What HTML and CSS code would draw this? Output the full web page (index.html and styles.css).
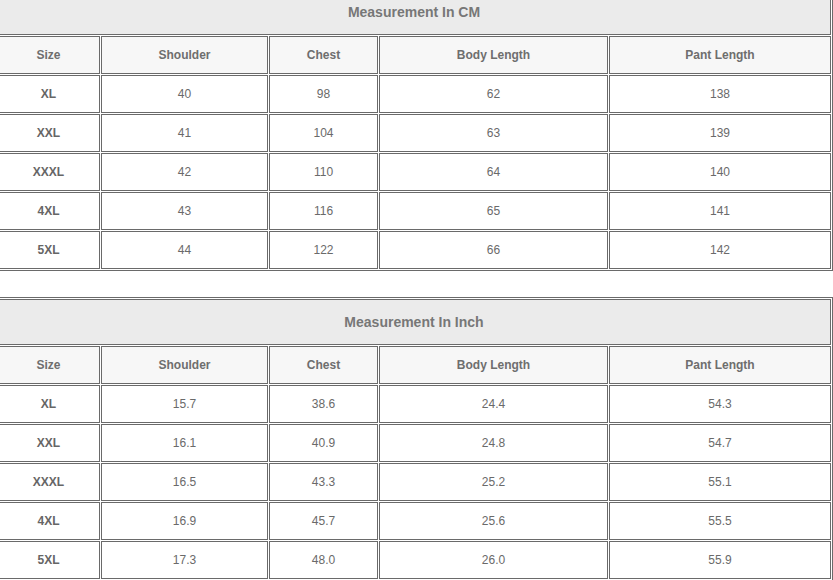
FILE: index.html
```html
<!DOCTYPE html>
<html>
<head>
<meta charset="utf-8">
<link rel="stylesheet" href="styles.css">
</head>
<body>
<div class="page">
  <div class="sheet sheet-cm">
    <div class="cell title">Measurement In CM</div>
    <div class="cell head">Size</div><div class="cell head">Shoulder</div><div class="cell head">Chest</div><div class="cell head">Body Length</div><div class="cell head">Pant Length</div>
    <div class="cell size">XL</div><div class="cell">40</div><div class="cell">98</div><div class="cell">62</div><div class="cell">138</div>
    <div class="cell size">XXL</div><div class="cell">41</div><div class="cell">104</div><div class="cell">63</div><div class="cell">139</div>
    <div class="cell size">XXXL</div><div class="cell">42</div><div class="cell">110</div><div class="cell">64</div><div class="cell">140</div>
    <div class="cell size">4XL</div><div class="cell">43</div><div class="cell">116</div><div class="cell">65</div><div class="cell">141</div>
    <div class="cell size">5XL</div><div class="cell">44</div><div class="cell">122</div><div class="cell">66</div><div class="cell">142</div>
  </div>
  <div class="sheet sheet-inch">
    <div class="cell title">Measurement In Inch</div>
    <div class="cell head">Size</div><div class="cell head">Shoulder</div><div class="cell head">Chest</div><div class="cell head">Body Length</div><div class="cell head">Pant Length</div>
    <div class="cell size">XL</div><div class="cell">15.7</div><div class="cell">38.6</div><div class="cell">24.4</div><div class="cell">54.3</div>
    <div class="cell size">XXL</div><div class="cell">16.1</div><div class="cell">40.9</div><div class="cell">24.8</div><div class="cell">54.7</div>
    <div class="cell size">XXXL</div><div class="cell">16.5</div><div class="cell">43.3</div><div class="cell">25.2</div><div class="cell">55.1</div>
    <div class="cell size">4XL</div><div class="cell">16.9</div><div class="cell">45.7</div><div class="cell">25.6</div><div class="cell">55.5</div>
    <div class="cell size">5XL</div><div class="cell">17.3</div><div class="cell">48.0</div><div class="cell">26.0</div><div class="cell">55.9</div>
  </div>
</div>
</body>
</html>
```
FILE: styles.css
```css
html, body {
  margin: 0;
  padding: 0;
  background: #ffffff;
  overflow: hidden;
}
.page {
  margin-left: -5px;
  margin-top: -13px;
  display: flex;
  flex-direction: column;
  gap: 26px;
  font-family: "Liberation Sans", Arial, sans-serif;
}
.sheet {
  display: grid;
  grid-template-columns: 103px 167px 109px 229px 222px;
  grid-template-rows: 46px repeat(6, 38px);
  gap: 1px;
  padding: 1px;
  border: 1px solid #6a6a6a;
  width: max-content;
  background: #ffffff;
}
.cell {
  box-sizing: border-box;
  border: 1px solid #6a6a6a;
  display: flex;
  align-items: center;
  justify-content: center;
  font-size: 12px;
  color: #6a6a6a;
  background: #ffffff;
}
.title {
  grid-column: 1 / -1;
  background: #ebebeb;
  font-size: 14px;
  font-weight: bold;
  color: #777777;
}
.head {
  background: #f7f7f7;
  font-weight: bold;
  color: #6e6e6e;
}
.size {
  font-weight: bold;
  color: #666666;
}
```
